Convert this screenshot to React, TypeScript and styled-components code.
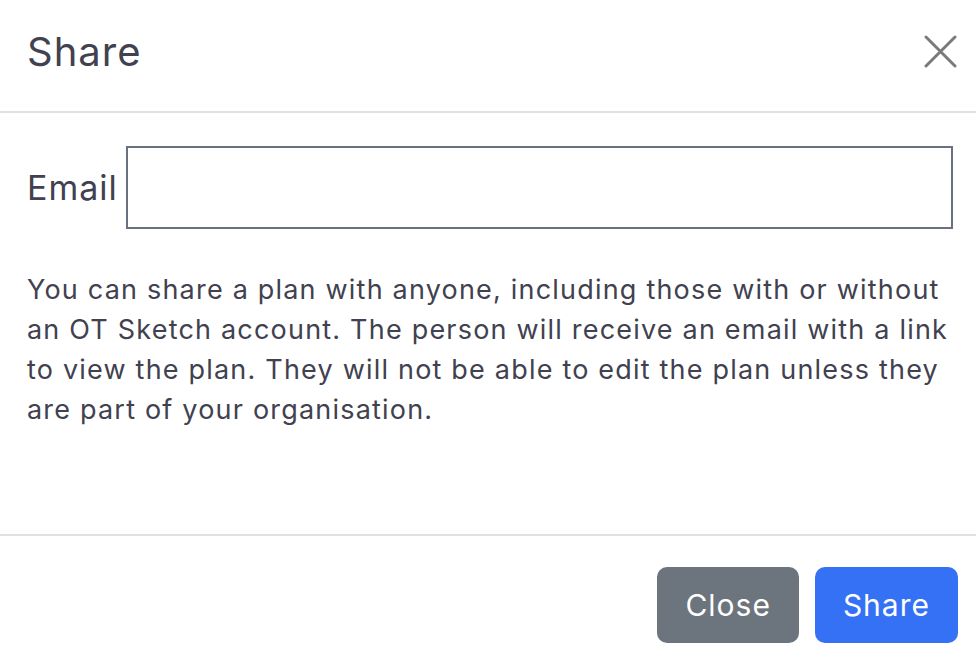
import styled, { createGlobalStyle } from 'styled-components';

const GlobalStyle = createGlobalStyle`
  body {
    margin: 0;
    background: #ffffff;
    font-family: Inter, 'Open Sans', sans-serif;
    color: #41414f;
  }
`;

const CloseIcon = () => (
  <svg width='33' height='33' viewBox='0 0 33 33'>
    <path d='M2 2 L31 31 M31 2 L2 31' stroke='#7a7a7a' strokeWidth='3' strokeLinecap='round' />
  </svg>
);

export default function App() {
  return (
    <>
      <GlobalStyle />
      <Modal>
        <Header>
          <Title>Share</Title>
          <CloseButton aria-label='close'>
            <CloseIcon />
          </CloseButton>
        </Header>
        <Body>
          <FormRow>
            <Label htmlFor='email'>Email</Label>
            <Input id='email' type='email' />
          </FormRow>
          <Note>
            You can share a plan with anyone, including those with or without an OT Sketch account. The
            person will receive an email with a link to view the plan. They will not be able to edit the
            plan unless they are part of your organisation.
          </Note>
        </Body>
        <Footer>
          <Button variant='secondary'>Close</Button>
          <Button variant='primary'>Share</Button>
        </Footer>
      </Modal>
    </>
  );
}

const Modal = styled.div`
  width: 976px;
  height: 664px;
  background: #ffffff;
  overflow: hidden;
`;

const Header = styled.div`
  height: 103px;
  display: flex;
  align-items: center;
  justify-content: space-between;
  padding: 0 19px 8px 27px;
  border-bottom: 2px solid #dee2e6;
`;

const Title = styled.h5`
  margin: 0;
  font-size: 40px;
  font-weight: 400;
  letter-spacing: 1px;
  line-height: 1;
`;

const CloseButton = styled.button`
  background: none;
  border: 0;
  padding: 0;
  width: 33px;
  height: 33px;
  display: flex;
  cursor: pointer;
`;

const Body = styled.div`
  padding: 33px 23px 104px 27px;
`;

const FormRow = styled.div`
  display: flex;
  align-items: center;
  gap: 8px;
`;

const Label = styled.label`
  font-size: 34px;
  letter-spacing: 1px;
`;

const Input = styled.input`
  flex: 1;
  height: 83px;
  box-sizing: border-box;
  border: 2px solid #6b7080;
  border-radius: 0;
  outline: none;
  padding: 0 16px;
  font: inherit;
  font-size: 26px;
`;

const Note = styled.p`
  margin: 41px -12px 0 0;
  font-size: 27px;
  letter-spacing: 1.2px;
  line-height: 40px;
`;

const Footer = styled.div`
  display: flex;
  justify-content: flex-end;
  gap: 16px;
  padding: 31px 18px 0;
  border-top: 2px solid #dee2e6;
`;

const Button = styled.button<{ variant: 'primary' | 'secondary' }>`
  height: 76px;
  padding: 0 28px;
  border: 0;
  border-radius: 10px;
  color: #ffffff;
  font-family: inherit;
  font-size: 30px;
  letter-spacing: 1px;
  background: ${(p) => (p.variant === 'primary' ? '#3571f4' : '#6c757d')};
`;
